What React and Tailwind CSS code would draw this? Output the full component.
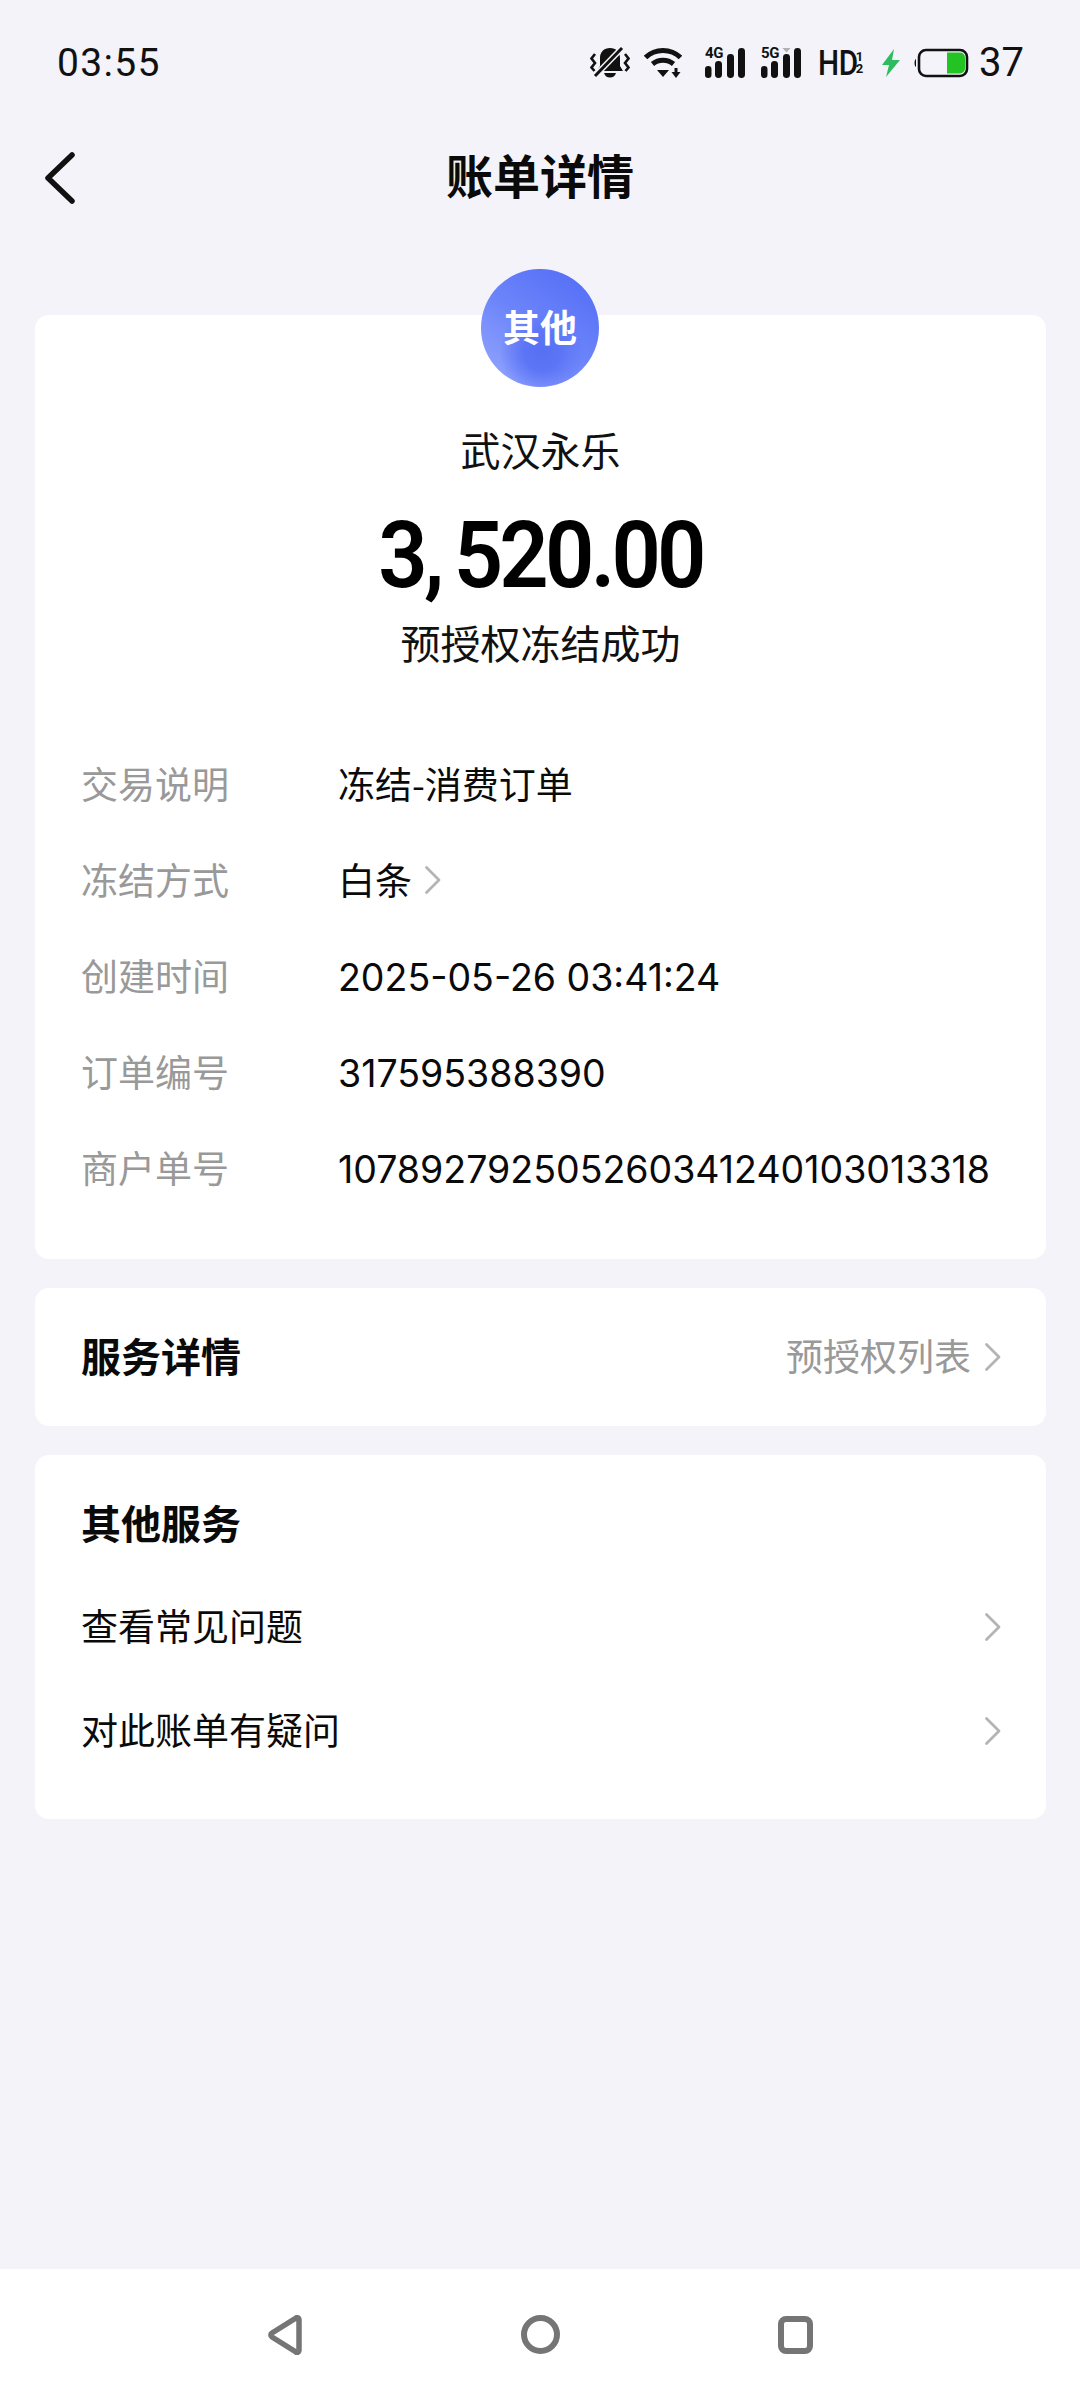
const CJK = { fontFamily: '"Noto Sans CJK SC", Roboto, sans-serif' };
const ROBOTO = { fontFamily: 'Roboto, "Noto Sans CJK SC", sans-serif' };
const INTER = { fontFamily: 'Inter, "Noto Sans CJK SC", sans-serif' };

function Chevron({ className = "" }) {
  return (
    <svg width="18" height="30" viewBox="0 0 18 30" fill="none" className={className}>
      <path d="M2.500 2.500 15 15 2.500 27.500" stroke="#b4b4b4" strokeWidth="2.800" strokeLinecap="round" strokeLinejoin="round" />
    </svg>
  );
}

function Signal({ label, tri }) {
  return (
    <div className="relative w-[40px] h-[30px]">
      <svg width="40" height="30" viewBox="0 0 40 30" className="absolute left-0 top-0">
        <rect x="0" y="18" width="6.500" height="12" rx="3.200" fill="#111" />
        <rect x="10" y="13" width="7" height="17" rx="3.400" fill="#111" />
        <rect x="22" y="6" width="7" height="24" rx="3.400" fill="#111" />
        <rect x="33" y="0" width="7" height="30" rx="3.400" fill="#111" />
        {tri && <path d="M21.500 0h8l-4 4.500z" fill="#b0b0b0" />}
      </svg>
      <span className="absolute left-0 top-[-3px] text-[15px] leading-[16px] font-bold text-[#111] tracking-[-0.5px]" style={ROBOTO}>{label}</span>
    </div>
  );
}

function Row({ label, num, children }) {
  return (
    <div className="flex items-center h-[96px] leading-[48px]">
      <span className="w-[257px] text-[37px] text-[#999999] shrink-0" style={CJK}>{label}</span>
      {num ? (
        <div className="text-[37.5px] h-[48px] pt-[3px] text-[#0a0a0a] whitespace-nowrap" style={INTER}>{children}</div>
      ) : (
        <div className="text-[37px] flex items-center h-[48px] text-[#0a0a0a] whitespace-nowrap" style={CJK}>{children}</div>
      )}
    </div>
  );
}

export default function App() {
  return (
    <div className="w-[1080px] h-[2400px] bg-[#f3f3f9] flex flex-col overflow-hidden" style={CJK}>
      {/* status bar */}
      <div className="h-[124px] shrink-0 flex items-center justify-between pl-[57px] pr-[56px] pt-[2px]">
        <span className="text-[39px] text-[#111] tracking-[1.300px]" style={ROBOTO}>03:55</span>
        <div className="flex items-center">
          <svg width="40" height="34" viewBox="0 0 40 34" fill="none" className="mr-[14px]">
            <path d="M20 2c-6 0-10 4-10 10v8l-3 5h26l-3-5v-8c0-6-4-10-10-10z" fill="#111" />
            <path d="M14 27h12c-1 3-3 4.500-6 4.500s-5-1.500-6-4.500z" fill="#111" />
            <path d="M4 31 33 1" stroke="#f3f3f9" strokeWidth="6" />
            <path d="M5 30 32 2" stroke="#111" strokeWidth="3" />
            <path d="M5 8 1.500 12.500 5 17l-3.500 4.500L4.500 25M35 8l3.500 4.500L35 17l3.500 4.500-3 3.500" stroke="#111" strokeWidth="2.600" />
          </svg>
          <svg width="38" height="32" viewBox="0 0 38 32" fill="none" className="mr-[23px]">
            <path d="M1.500 10.500C11 1 27 1 36.500 10.500" stroke="#111" strokeWidth="5" />
            <path d="M8.500 17c6-5 15-5 21 0" stroke="#111" strokeWidth="5" />
            <path d="M13 23h12l-6 7z" fill="#111" />
            <path d="M32 21v5" stroke="#f3f3f9" strokeWidth="7" />
            <path d="M32 21v5" stroke="#111" strokeWidth="3" />
            <path d="M27.500 25h9l-4.500 6z" fill="#111" />
          </svg>
          <Signal label="4G" />
          <div className="w-[16px]" />
          <Signal label="5G" tri />
          <div className="flex items-center ml-[17px] text-[#111]" style={ROBOTO}>
            <span className="text-[35px] leading-none font-medium tracking-[-0.5px] scale-x-[0.85] origin-left w-[37px]">HD</span>
            <div className="flex flex-col items-center w-[9px] text-[13px] leading-[12px] font-bold">
              <span>1</span>
              <span>2</span>
            </div>
          </div>
          <svg width="18" height="28" viewBox="0 0 18 28" className="ml-[18px]">
            <path d="M12 0 0 16h7l-3 12 14-17h-8z" fill="#2dbd5f" />
          </svg>
          <svg width="56" height="30" viewBox="0 0 56 30" fill="none" className="ml-[13px]">
            <path d="M3 11c-2 1-2 7 0 8z" fill="#111" />
            <rect x="6" y="2" width="48" height="26" rx="7" stroke="#111" strokeWidth="2.600" />
            <path d="M34 4.500h13a5 5 0 0 1 5 5v11a5 5 0 0 1-5 5H34z" fill="#22c322" />
          </svg>
          <span className="ml-[10px] text-[40px] leading-none text-[#111]" style={ROBOTO}>37</span>
        </div>
      </div>

      {/* title bar */}
      <div className="relative h-[106px] shrink-0 flex items-center justify-center">
        <svg width="32" height="52" viewBox="0 0 32 52" fill="none" className="absolute left-[44px] top-[28px]">
          <path d="M28 3 4 26l24 23" stroke="#111" strokeWidth="5.500" strokeLinecap="round" strokeLinejoin="round" />
        </svg>
        <span className="text-[47px] font-bold text-[#0a0a0a] -mt-[5px]">账单详情</span>
      </div>

      {/* cards */}
      <div className="flex flex-col gap-[29px] pl-[35px] pr-[34px] pt-[85px]">
        <div className="relative bg-white rounded-[14px] h-[944px] px-[46px] pt-[106px]">
          <div
            className="absolute left-[446px] -top-[46px] w-[118px] h-[118px] rounded-full flex items-center justify-center text-white text-[37px] font-bold"
            style={{ background: "radial-gradient(circle at 52% 70%, #5670f4 0%, #5c75f6 18%, rgba(92,117,246,0) 42%), linear-gradient(215deg, #506af6 0%, #6c84fa 50%, #98a9fd 100%)" }}
          >
            <span className="-mt-[2px]">其他</span>
          </div>
          <div className="flex flex-col items-center text-[#111]">
            <div className="text-[40px] leading-[56px]">武汉永乐</div>
            <div className="text-[92px] leading-[110px] font-semibold text-black tracking-[-4px] mt-[24px] flex scale-x-[0.94]" style={ROBOTO}>
              <span>3,</span>
              <span className="ml-[14px]">520.00</span>
            </div>
            <div className="text-[40px] leading-[56px] mt-[3px]">预授权冻结成功</div>
          </div>
          <div className="mt-[65px]">
            <Row label="交易说明">冻结-消费订单</Row>
            <Row label="冻结方式">
              <span>白条</span>
              <Chevron className="ml-[12px] mt-[2px]" />
            </Row>
            <Row label="创建时间" num>2025-05-26 03:41:24</Row>
            <Row label="订单编号" num>317595388390</Row>
            <Row label="商户单号" num>107892792505260341240103013318</Row>
          </div>
        </div>

        <div className="bg-white rounded-[14px] h-[138px] pl-[46px] pr-[44px] flex items-center justify-between">
          <span className="text-[40px] font-bold text-[#0a0a0a] -mt-[4px]">服务详情</span>
          <div className="flex items-center">
            <span className="text-[37px] text-[#999999] -mt-[2px]">预授权列表</span>
            <Chevron className="ml-[13px]" />
          </div>
        </div>

        <div className="bg-white rounded-[14px] h-[364px] pl-[46px] pr-[44px] pt-[35px]">
          <div className="text-[40px] leading-[64px] font-bold text-[#0a0a0a]">其他服务</div>
          <div className="flex items-center justify-between h-[104px] mt-[20px] text-[37px] text-[#0a0a0a]">
            <span>查看常见问题</span>
            <Chevron className="mt-[1px]" />
          </div>
          <div className="flex items-center justify-between h-[104px] text-[37px] text-[#0a0a0a]">
            <span>对此账单有疑问</span>
            <Chevron className="mt-[1px]" />
          </div>
        </div>
      </div>

      {/* nav bar */}
      <div className="mt-auto h-[131px] shrink-0 bg-white flex items-center justify-center">
        <div className="w-[546px] flex items-center justify-between">
          <svg width="36" height="40" viewBox="0 0 36 40" fill="none">
            <path d="M32 4.500v31c0 1.500-2 2.500-3 1.500L5 22c-1.500-1-1.500-3 0-4L29 3c1-1 3 0 3 1.500z" stroke="#757575" strokeWidth="5.500" strokeLinejoin="round" />
          </svg>
          <div className="w-[39px] h-[39px] rounded-full border-[6px] border-[#757575]" />
          <div className="w-[35px] h-[38px] rounded-[8px] border-[6px] border-[#757575]" />
        </div>
      </div>
    </div>
  );
}
